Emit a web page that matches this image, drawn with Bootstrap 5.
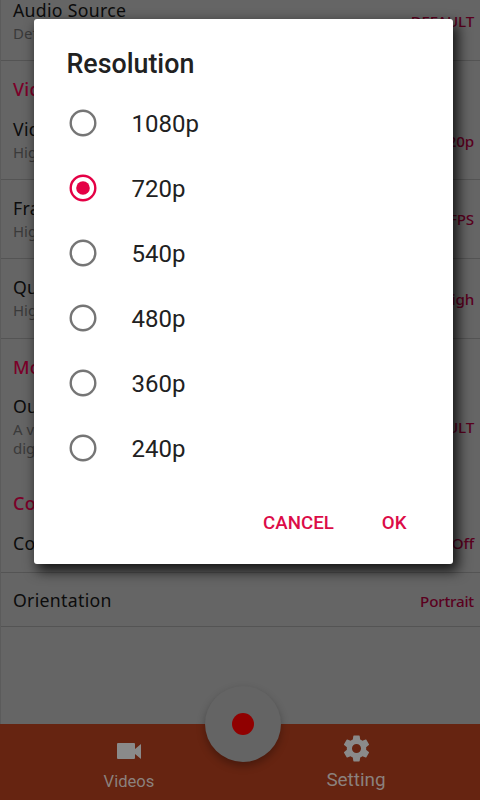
<!DOCTYPE html>
<html lang="en">
<head>
<meta charset="utf-8">
<meta name="viewport" content="width=device-width, initial-scale=1">
<title>Recorder settings</title>
<link href="https://cdn.jsdelivr.net/npm/bootstrap@5.3.0/dist/css/bootstrap.min.css" rel="stylesheet">
<style>
body{width:480px;height:800px;background:#656565;font-family:Roboto,sans-serif}
.settings{height:724px;font-family:"Noto Sans",sans-serif;border-left:1px solid #5b5b5b}
.setting{border-bottom:1px solid #545454;padding:0 6px 0 12px;color:#0c0c0c;font-size:17.7px;letter-spacing:.3px;line-height:21px}
.setting .note{font-size:15px;line-height:19px;color:#3a3a3a;letter-spacing:0;padding-top:3px}
.setting .value{font-size:15.2px;font-weight:500;letter-spacing:-.2px;color:#5a001e;padding-top:1px}
.group-title{color:#7c0029;font-weight:500;font-size:18px;line-height:24px}
.h-source{height:61px}.h-video{height:119px}.h-rate{height:79px}.h-quality{height:80px}.h-more{height:234px}.h-orient{height:54px}
.h-source .value{padding-top:11px}
.video-row{margin-top:18px}
.output-row{margin-top:17px}
.control-title{margin-top:33px}
.control-row{margin-top:17px}
.h-orient{padding-top:2px}
.tabs{height:76px;background:#662411;color:#8b817d}
.tab-item{line-height:20px}
.tab-videos{width:258px;padding-top:14px;font-size:16.6px}
.tab-setting{width:196px;padding-top:9px;font-size:18.9px}
.tab-item svg{color:#8a8a8a}
.tab-videos span{margin-top:8px}
.tab-setting span{margin-top:6px}
.record{width:76px;height:76px;left:205px;top:686px;background:#646464;box-shadow:0 4px 9px rgba(0,0,0,.3)}
.record i{width:22px;height:22px;background:#900000}
.dialog{left:34px;top:19px;width:419px;height:545px;border-radius:3px;box-shadow:4px 6px 13px 1px rgba(0,0,0,.8);color:#212121;padding:0 32.5px}
.dialog h1{font-size:26.8px;font-weight:500;line-height:32px;padding-top:29px;height:71px}
.choice{height:65px;font-size:24px}
.choice svg{width:32px;height:32px}
.choice span{margin-left:33px;padding-top:3px}
.actions{font-size:18.7px;font-weight:500;color:#dc0c48;line-height:24px;padding:31px 14px 0 0;gap:48px}
.accent{color:#e40045}.ring{color:#757575}
</style>
<script src="https://cdn.jsdelivr.net/npm/bootstrap@5.3.0/dist/js/bootstrap.bundle.min.js"></script>
</head>
<body class="position-relative overflow-hidden">
<main class="settings">
  <section class="setting h-source d-flex justify-content-between"><div><div>Audio Source</div><div class="note">Default</div></div><div class="value">DEFAULT</div></section>
  <section class="setting h-video"><div class="group-title pt-3">Video</div>
    <div class="video-row d-flex justify-content-between align-items-center"><div><div>Video</div><div class="note">High</div></div><div class="value">720p</div></div></section>
  <section class="setting h-rate d-flex justify-content-between align-items-center"><div><div>Frame</div><div class="note">High</div></div><div class="value">FPS</div></section>
  <section class="setting h-quality d-flex justify-content-between align-items-center"><div><div>Quality</div><div class="note">High</div></div><div class="value">High</div></section>
  <section class="setting h-more"><div class="group-title pt-3">More</div>
    <div class="output-row d-flex justify-content-between align-items-center"><div><div>Output</div><div class="note">A video<br>digital</div></div><div class="value">DEFAULT</div></div>
    <div class="group-title control-title">Control</div>
    <div class="control-row d-flex justify-content-between align-items-center"><div>Control</div><div class="value">Off</div></div></section>
  <section class="setting h-orient d-flex justify-content-between align-items-center"><div>Orientation</div><div class="value">Portrait</div></section>
</main>
<nav class="tabs d-flex">
  <div class="tab-item tab-videos d-flex flex-column align-items-center"><svg width="26" height="26" viewBox="0 0 26 26" fill="currentColor"><path d="M2 5h16q1 0 1 1v5l6-5v15l-6-5V20q0 1-1 1H2q-1 0-1-1V6q0-1 1-1z"/></svg><span>Videos</span></div>
  <div class="tab-item tab-setting d-flex flex-column align-items-center"><svg width="31" height="31" viewBox="0 0 24 24" fill="currentColor"><path d="M19.43 12.98c.04-.32.07-.64.07-.98s-.03-.66-.07-.98l2.11-1.65a.5.5 0 0 0 .12-.64l-2-3.46a.5.5 0 0 0-.61-.22l-2.49 1a7.3 7.3 0 0 0-1.69-.98l-.38-2.65A.49.49 0 0 0 14 2h-4a.49.49 0 0 0-.49.42l-.38 2.65c-.61.25-1.17.59-1.69.98l-2.49-1a.5.5 0 0 0-.61.22l-2 3.46a.5.5 0 0 0 .12.64l2.11 1.65c-.04.32-.07.65-.07.98s.03.66.07.98l-2.11 1.65a.5.5 0 0 0-.12.64l2 3.46c.12.22.39.3.61.22l2.49-1c.52.4 1.08.73 1.69.98l.38 2.65c.03.24.24.42.49.42h4c.25 0 .46-.18.49-.42l.38-2.65c.61-.25 1.17-.59 1.69-.98l2.49 1c.23.09.49 0 .61-.22l2-3.46a.5.5 0 0 0-.12-.64l-2.11-1.65zM12 15.5A3.5 3.5 0 1 1 12 8.5a3.5 3.5 0 0 1 0 7z"/></svg><span>Setting</span></div>
</nav>
<div class="record position-absolute rounded-circle d-flex align-items-center justify-content-center"><i class="rounded-circle"></i></div>
<div class="dialog position-absolute bg-white" role="dialog" aria-label="Resolution">
  <h1 class="m-0">Resolution</h1>
  <div class="choice d-flex align-items-center"><svg viewBox="0 0 32 32"><circle class="ring" cx="16" cy="16" r="12.3" fill="none" stroke="currentColor" stroke-width="2.4"/></svg><span>1080p</span></div>
  <div class="choice d-flex align-items-center"><svg class="accent" viewBox="0 0 32 32"><circle cx="16" cy="16" r="12.3" fill="none" stroke="currentColor" stroke-width="2.4"/><circle cx="16" cy="16" r="6.8" fill="currentColor"/></svg><span>720p</span></div>
  <div class="choice d-flex align-items-center"><svg viewBox="0 0 32 32"><circle class="ring" cx="16" cy="16" r="12.3" fill="none" stroke="currentColor" stroke-width="2.4"/></svg><span>540p</span></div>
  <div class="choice d-flex align-items-center"><svg viewBox="0 0 32 32"><circle class="ring" cx="16" cy="16" r="12.3" fill="none" stroke="currentColor" stroke-width="2.4"/></svg><span>480p</span></div>
  <div class="choice d-flex align-items-center"><svg viewBox="0 0 32 32"><circle class="ring" cx="16" cy="16" r="12.3" fill="none" stroke="currentColor" stroke-width="2.4"/></svg><span>360p</span></div>
  <div class="choice d-flex align-items-center"><svg viewBox="0 0 32 32"><circle class="ring" cx="16" cy="16" r="12.3" fill="none" stroke="currentColor" stroke-width="2.4"/></svg><span>240p</span></div>
  <div class="actions d-flex justify-content-end"><span>CANCEL</span><span>OK</span></div>
</div>
</body>
</html>
